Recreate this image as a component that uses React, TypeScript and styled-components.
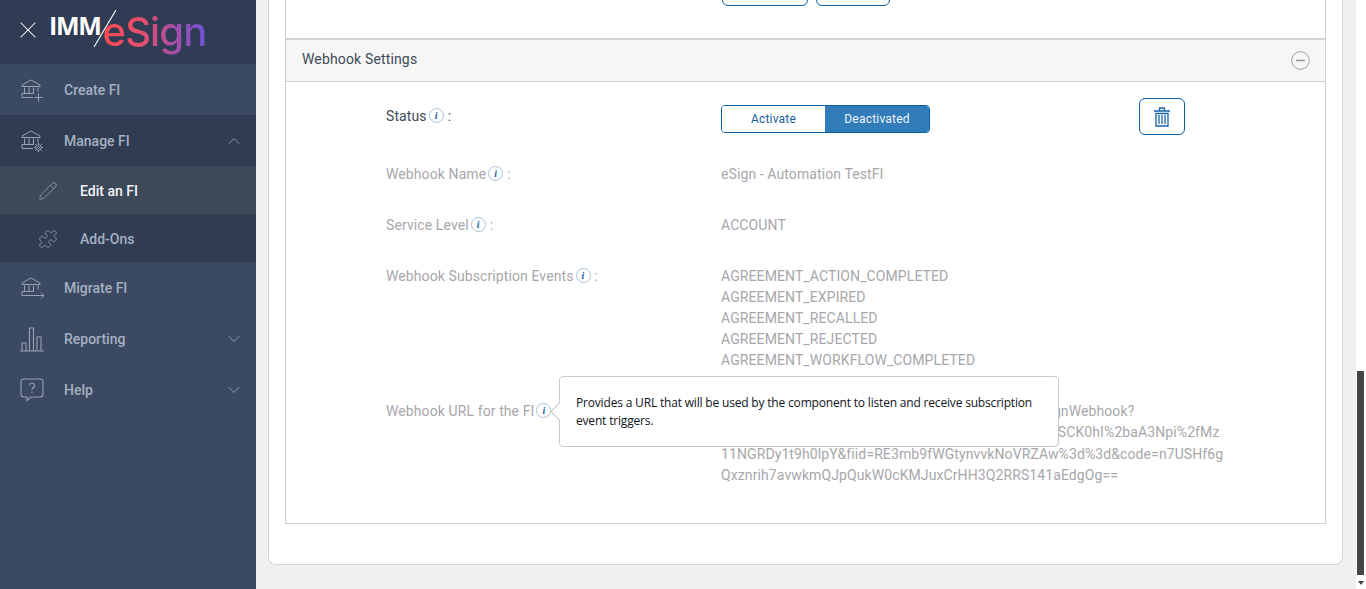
import React from "react";
import styled, { createGlobalStyle } from "styled-components";
import { ChevronDown, ChevronUp, Pencil, Puzzle, X } from "lucide-react";

const GlobalStyle = createGlobalStyle`
  html, body {
    margin: 0;
    padding: 0;
    height: 589px;
    overflow: hidden;
    background: #f0f0f0;
    font-family: Roboto, "Liberation Sans", sans-serif;
  }
`;

const Page = styled.div`
  display: flex;
  width: 1366px;
  height: 589px;
`;

const Sidebar = styled.aside`
  width: 256px;
  flex: none;
  background: #3b4a62;
`;

const LogoBar = styled.div`
  height: 64px;
  background: #303c53;
  display: flex;
  align-items: center;
  padding-left: 14px;
  gap: 7px;
  color: #fff;
`;

const CloseIcon = styled(X)`
  margin-top: -4px;
  flex: none;
`;

const Logo = styled.div`
  position: relative;
  display: flex;
  align-items: flex-start;
  height: 64px;
`;

const LogoImm = styled.span`
  font-family: "Open Sans", sans-serif;
  font-weight: 700;
  font-size: 25px;
  line-height: 30px;
  letter-spacing: -1.3px;
  color: #fff;
  margin-top: 10px;
`;

const LogoSlash = styled.svg`
  position: absolute;
  left: 44px;
  top: 10px;
`;

const LogoSign = styled.span`
  font-family: Inter, sans-serif;
  font-weight: 500;
  font-size: 40px;
  line-height: 48px;
  margin-left: 2px;
  margin-top: 8px;
  letter-spacing: -0.9px;
  background: linear-gradient(90deg, #ff4a50 0%, #e0506f 40%, #a14fae 72%, #6d52d3 100%);
  -webkit-background-clip: text;
  background-clip: text;
  color: transparent;
`;

const NavRow = styled.div<{ $bg?: string; $sub?: boolean; $h: number; $bright?: boolean }>`
  height: ${(p) => p.$h}px;
  box-sizing: border-box;
  background: ${(p) => p.$bg || "transparent"};
  display: flex;
  align-items: center;
  padding-left: ${(p) => (p.$sub ? 38 : 20)}px;
  padding-top: ${(p) => (p.$sub ? 2 : 0)}px;
  padding-right: 12px;
  color: ${(p) => (p.$bright ? "#f2f4f7" : "#a6b0c0")};
  font-size: 14px;
  font-weight: 500;
`;

const NavIcon = styled.span<{ $sub?: boolean }>`
  width: ${(p) => (p.$sub ? 42 : 44)}px;
  flex: none;
  display: flex;
  align-items: center;
  color: #98a2b2;
`;

const NavLabel = styled.span`
  flex: 1;
`;

const Caret = styled.span`
  display: flex;
  color: #98a2b2;
`;

const Main = styled.main`
  flex: 1;
  display: flex;
  flex-direction: column;
  padding-left: 12px;
  padding-right: 23px;
`;

const Card = styled.section`
  height: 565px;
  box-sizing: border-box;
  background: #fff;
  border: 1px solid #d5d5d5;
  border-top: 0;
  border-radius: 0 0 8px 8px;
  padding: 0 16px 0;
`;

const Panel = styled.div`
  border: 1px solid #cfcfcf;
  border-top: 0;
  height: 524px;
  box-sizing: border-box;
`;

const TopStrip = styled.div`
  height: 38px;
  padding-left: 436px;
`;

const TopClip = styled.div`
  height: 6px;
  overflow: hidden;
  display: flex;
  gap: 8px;
  align-items: flex-end;
`;

const GhostButton = styled.div<{ $w: number }>`
  width: ${(p) => p.$w}px;
  height: 30px;
  flex: none;
  box-sizing: border-box;
  border: 1px solid #0b5fa5;
  border-radius: 6px;
`;

const SectionHeader = styled.div`
  height: 44px;
  box-sizing: border-box;
  background: #f6f6f6;
  border-top: 2px solid #d2d2d6;
  border-bottom: 1px solid #cfcfcf;
  display: flex;
  align-items: center;
  justify-content: space-between;
  padding: 0 15px 3px 16px;
  font-size: 14px;
  color: #3e4a56;
  letter-spacing: 0.15px;
`;

const CollapseIcon = styled.svg`
  margin-top: 3px;
`;

const Body = styled.div`
  padding: 16px 0 0 100px;
`;

const Row = styled.div<{ $h: number }>`
  display: flex;
  min-height: ${(p) => p.$h}px;
`;

const Label = styled.div<{ $dark?: boolean }>`
  width: 335px;
  flex: none;
  position: relative;
  font-size: 14px;
  line-height: 21px;
  letter-spacing: 0.1px;
  color: ${(p) => (p.$dark ? "#3e4a56" : "#a7a7ab")};
  display: flex;
  align-items: flex-start;
  padding-top: 8px;
  height: 21px;
`;

const InfoDot = styled.span`
  width: 15px;
  height: 15px;
  margin: 2px 4px 0 2px;
  flex: none;
  box-sizing: border-box;
  border: 1px solid #a9c3da;
  border-radius: 50%;
  display: flex;
  align-items: center;
  justify-content: center;
  font: italic 700 10px "Liberation Serif", serif;
  color: #1a5f9c;
`;

const Value = styled.div`
  font-size: 14px;
  line-height: 21px;
  letter-spacing: 0.1px;
  color: #a7a7ab;
  padding-top: 8px;
  width: 512px;
`;

const UrlLine = styled.div`
  white-space: nowrap;
  line-height: 21.3px;
`;

const StatusControls = styled.div`
  flex: 1;
  display: flex;
  align-items: flex-start;
  padding-top: 7px;
`;

const Toggle = styled.div`
  display: flex;
  width: 209px;
  height: 28px;
  box-sizing: border-box;
  border: 1px solid #0b5fa5;
  border-radius: 4px;
  overflow: hidden;
  font-size: 12px;
`;

const ToggleSide = styled.div<{ $on?: boolean }>`
  flex: ${(p) => (p.$on ? "0 0 104px" : 1)};
  display: flex;
  align-items: center;
  justify-content: center;
  background: ${(p) => (p.$on ? "#317cb9" : "#fff")};
  color: ${(p) => (p.$on ? "#eef5fb" : "#175f9e")};
  letter-spacing: 0.2px;
`;

const TrashButton = styled.div`
  margin-left: 209px;
  margin-top: -7px;
  width: 46px;
  height: 37px;
  box-sizing: border-box;
  border: 1px solid #0b5fa5;
  border-radius: 6px;
  display: flex;
  align-items: center;
  justify-content: center;
`;

const Tooltip = styled.div`
  position: absolute;
  left: 173px;
  top: -17px;
  width: 500px;
  height: 71px;
  box-sizing: border-box;
  background: #fff;
  border: 1px solid #c9c9c9;
  border-radius: 4px;
  padding: 17px 16px 0;
  font-size: 12px;
  line-height: 18px;
  letter-spacing: -0.18px;
  color: #10131a;
  font-family: "Open Sans", sans-serif;
  z-index: 2;
  &::before {
    content: "";
    position: absolute;
    left: -7px;
    top: 28px;
    width: 12px;
    height: 12px;
    background: #fff;
    border-left: 1px solid #c9c9c9;
    border-bottom: 1px solid #c9c9c9;
    transform: rotate(45deg);
  }
`;

const Scrollbar = styled.div`
  position: absolute;
  right: 0;
  top: 0;
  width: 10px;
  height: 589px;
  background: #fff;
`;

const ScrollThumb = styled.div`
  position: absolute;
  left: 1px;
  width: 7px;
  top: 371px;
  height: 204px;
  background: #454545;
`;

const ScrollArrow = styled.div`
  position: absolute;
  left: 2px;
  bottom: 4px;
  width: 0;
  height: 0;
  border-left: 3px solid transparent;
  border-right: 3px solid transparent;
  border-top: 4px solid #444;
`;

const BankIcon = ({ extra }: { extra: React.ReactNode }) => (
  <svg width="24" height="26" viewBox="0 0 24 26" fill="none" stroke="currentColor" strokeWidth="1">
    <path d="M2 8 11 3l9 5v1.500H2z" />
    <path d="M4.500 10.500v6M9 10.500v6M13.500 10.500v6M18 10.500v4" />
    <path d="M2 16.500h12M2 16.500v4h11" />
    {extra}
  </svg>
);

const InfoIcon = () => <InfoDot>i</InfoDot>;

const App = () => {
  return (
    <Page>
      <GlobalStyle />
      <Sidebar>
        <LogoBar>
          <CloseIcon size={28} strokeWidth={0.9} />
          <Logo>
            <LogoImm>IMM</LogoImm>
            <LogoSlash width="24" height="40" viewBox="0 0 24 40">
              <path d="M23 0 1 37" stroke="#fff" strokeWidth="1.1" fill="none" />
            </LogoSlash>
            <LogoSign>eSign</LogoSign>
          </Logo>
        </LogoBar>
        <NavRow $h={51}>
          <NavIcon>
            <BankIcon extra={<path d="M18.500 16.500v8M14.500 20.500h8" />} />
          </NavIcon>
          <NavLabel>Create FI</NavLabel>
        </NavRow>
        <NavRow $h={51} $bg="#303c51">
          <NavIcon>
            <BankIcon
              extra={
                <>
                  <circle cx="18.500" cy="19.500" r="2.800" />
                  <circle cx="18.500" cy="19.500" r="0.900" />
                  <path d="M18.500 15v1.700M18.500 22.300V24M14 19.500h1.700M21.300 19.500H23M15.300 16.300l1.200 1.200M20.500 21.500l1.200 1.200M21.700 16.300l-1.200 1.200M16.500 21.500l-1.200 1.200" />
                </>
              }
            />
          </NavIcon>
          <NavLabel>Manage FI</NavLabel>
          <Caret>
            <ChevronUp size={20} strokeWidth={1.1} />
          </Caret>
        </NavRow>
        <NavRow $h={48} $sub $bright $bg="#3d4859">
          <NavIcon $sub>
            <Pencil size={20} strokeWidth={1} />
          </NavIcon>
          <NavLabel>Edit an FI</NavLabel>
        </NavRow>
        <NavRow $h={48} $sub $bg="#303c51">
          <NavIcon $sub>
            <Puzzle size={20} strokeWidth={0.9} />
          </NavIcon>
          <NavLabel>Add-Ons</NavLabel>
        </NavRow>
        <NavRow $h={51}>
          <NavIcon>
            <BankIcon extra={<path d="M13 20.500h11M21 17.500l3 3-3 3" />} />
          </NavIcon>
          <NavLabel>Migrate FI</NavLabel>
        </NavRow>
        <NavRow $h={51}>
          <NavIcon>
            <svg width="24" height="26" viewBox="0 0 24 26" fill="none" stroke="currentColor" strokeWidth="1.1">
              <path d="M0 25h24M2 25v-8h4v8M9.500 25V2h4v23M17 25V11h4v14" />
            </svg>
          </NavIcon>
          <NavLabel>Reporting</NavLabel>
          <Caret>
            <ChevronDown size={20} strokeWidth={1.1} />
          </Caret>
        </NavRow>
        <NavRow $h={51}>
          <NavIcon>
            <svg width="24" height="24" viewBox="0 0 24 24" fill="none" stroke="currentColor" strokeWidth="1.1">
              <path d="M4 1h16a3 3 0 0 1 3 3v12a3 3 0 0 1-3 3h-9l-4 3.500V19H4a3 3 0 0 1-3-3V4a3 3 0 0 1 3-3z" />
              <path d="M9.500 7.500a2.500 2.500 0 1 1 3.700 2.200c-.8.500-1.200 1-1.200 2M12 13.500v1.500" />
            </svg>
          </NavIcon>
          <NavLabel>Help</NavLabel>
          <Caret>
            <ChevronDown size={20} strokeWidth={1.1} />
          </Caret>
        </NavRow>
      </Sidebar>
      <Main>
        <Card>
          <Panel>
            <TopStrip>
              <TopClip>
                <GhostButton $w={86} />
                <GhostButton $w={74} />
              </TopClip>
            </TopStrip>
            <SectionHeader>
              Webhook Settings
              <CollapseIcon width="19" height="19" viewBox="0 0 19 19" fill="none">
                <circle cx="9.500" cy="9.500" r="8.800" stroke="#9aa3ad" />
                <path d="M5 9.500h9" stroke="#8b929b" strokeWidth="1.4" />
              </CollapseIcon>
            </SectionHeader>
            <Body>
              <Row $h={58}>
                <Label $dark>
                  Status
                  <InfoIcon />:
                </Label>
                <StatusControls>
                  <Toggle>
                    <ToggleSide>Activate</ToggleSide>
                    <ToggleSide $on>Deactivated</ToggleSide>
                  </Toggle>
                  <TrashButton>
                    <svg width="16" height="20" viewBox="0 0 16 20" fill="none" stroke="#1463a8" strokeWidth="1.3">
                      <path d="M0 4h16M5.500 3.500V1h5v2.500M2 6.500h12V19H2z" />
                      <path d="M5 8v9M8 8v9M11 8v9" />
                    </svg>
                  </TrashButton>
                </StatusControls>
              </Row>
              <Row $h={51}>
                <Label>
                  Webhook Name
                  <InfoIcon />:
                </Label>
                <Value>eSign - Automation TestFI</Value>
              </Row>
              <Row $h={51}>
                <Label>
                  Service Level
                  <InfoIcon />:
                </Label>
                <Value>ACCOUNT</Value>
              </Row>
              <Row $h={135}>
                <Label>
                  Webhook Subscription Events
                  <InfoIcon />:
                </Label>
                <Value>
                  AGREEMENT_ACTION_COMPLETED
                  <br />
                  AGREEMENT_EXPIRED
                  <br />
                  AGREEMENT_RECALLED
                  <br />
                  AGREEMENT_REJECTED
                  <br />
                  AGREEMENT_WORKFLOW_COMPLETED
                </Value>
              </Row>
              <Row $h={100}>
                <Label>
                  Webhook URL for the FI
                  <InfoIcon />
                  <Tooltip>
                    Provides a URL that will be used by the component to listen and receive subscription event triggers.
                  </Tooltip>
                </Label>
                <Value>
                  <UrlLine>https://secure2.echosign.com/webhooks/Adobe/eSignWebhook?</UrlLine>
                  <UrlLine>apikey=rlCAzQtY8bWmPdGqVxTn3jLs7xKvLp2TeWqRSCK0hI%2baA3Npi%2fMz</UrlLine>
                  <UrlLine>11NGRDy1t9h0lpY&amp;fiid=RE3mb9fWGtynvvkNoVRZAw%3d%3d&amp;code=n7USHf6g</UrlLine>
                  <UrlLine>Qxznrih7avwkmQJpQukW0cKMJuxCrHH3Q2RRS141aEdgOg==</UrlLine>
                </Value>
              </Row>
            </Body>
          </Panel>
        </Card>
      </Main>
      <Scrollbar>
        <ScrollThumb />
        <ScrollArrow />
      </Scrollbar>
    </Page>
  );
};

export default App;
